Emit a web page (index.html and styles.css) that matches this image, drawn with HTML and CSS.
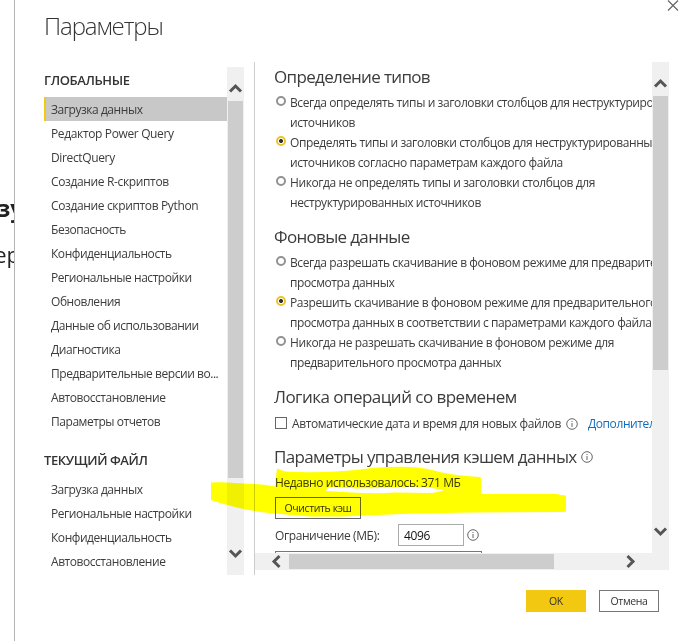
FILE: index.html
```
<!DOCTYPE html>
<html lang="ru">
<head>
<meta charset="utf-8">
<title>Параметры</title>
<link rel="stylesheet" href="styles.css">
</head>
<body>
<div class="screen">
  <aside class="backdrop">
    <div class="backdrop-title">зу</div>
    <div class="backdrop-text">ер</div>
  </aside>
  <main class="dialog">
    <header class="top">
      <h1>Параметры</h1>
      <svg class="close" width="12" height="12" viewBox="0 0 12 12"><path d="M1 0.5 11 10.5M11 0.5 1 10.5"/></svg>
    </header>
    <div class="body">
      <nav class="nav">
        <div class="nav-list">
          <h2 class="first">ГЛОБАЛЬНЫЕ</h2>
          <a class="selected">Загрузка данных</a>
          <a class="latin">Редактор Power Query</a>
          <a class="latin">DirectQuery</a>
          <a class="latin">Создание R-скриптов</a>
          <a class="latin">Создание скриптов Python</a>
          <a>Безопасность</a>
          <a>Конфиденциальность</a>
          <a>Региональные настройки</a>
          <a>Обновления</a>
          <a>Данные об использовании</a>
          <a>Диагностика</a>
          <a>Предварительные версии во...</a>
          <a>Автовосстановление</a>
          <a>Параметры отчетов</a>
          <h2>ТЕКУЩИЙ ФАЙЛ</h2>
          <a>Загрузка данных</a>
          <a>Региональные настройки</a>
          <a>Конфиденциальность</a>
          <a>Автовосстановление</a>
        </div>
        <div class="vbar">
          <svg class="arrow" width="17" height="34" viewBox="0 0 17 34"><path d="M3 24.5 8.5 19 14 24.5"/></svg>
          <div class="thumb nav-thumb"></div>
          <svg class="arrow last" width="17" height="34" viewBox="0 0 17 34"><path d="M3 9.5 8.5 15 14 9.5"/></svg>
        </div>
      </nav>
      <section class="pane">
        <div class="view">
          <div class="content">
            <h3 class="first">Определение типов</h3>
            <div class="opt"><i class="radio"></i><p>Всегда определять типы и заголовки столбцов для неструктурированных<br>источников</p></div>
            <div class="opt"><i class="radio on"></i><p>Определять типы и заголовки столбцов для неструктурированных<br>источников согласно параметрам каждого файла</p></div>
            <div class="opt"><i class="radio"></i><p>Никогда не определять типы и заголовки столбцов для<br>неструктурированных источников</p></div>
            <h3>Фоновые данные</h3>
            <div class="opt"><i class="radio"></i><p>Всегда разрешать скачивание в фоновом режиме для предварительного<br>просмотра данных</p></div>
            <div class="opt"><i class="radio on"></i><p>Разрешить скачивание в фоновом режиме для предварительного<br>просмотра данных в соответствии с параметрами каждого файла</p></div>
            <div class="opt"><i class="radio"></i><p>Никогда не разрешать скачивание в фоновом режиме для<br>предварительного просмотра данных</p></div>
            <h3 class="loose">Логика операций со временем</h3>
            <div class="check"><i class="box"></i><span>Автоматические дата и время для новых файлов</span><svg class="info" width="12" height="12" viewBox="0 0 12 12"><circle cx="6" cy="6" r="5.3"/><path d="M6 5V9M6 3V4"/></svg><a class="link">Дополнительно</a></div>
            <h3>Параметры управления кэшем данных<svg class="info" width="12" height="12" viewBox="0 0 12 12"><circle cx="6" cy="6" r="5.3"/><path d="M6 5V9M6 3V4"/></svg></h3>
            <div class="used">Недавно использовалось: 371 МБ</div>
            <button class="clear">Очистить кэш</button>
            <div class="limit"><label>Ограничение (МБ):</label><div class="input">4096</div><svg class="info" width="12" height="12" viewBox="0 0 12 12"><circle cx="6" cy="6" r="5.3"/><path d="M6 5V9M6 3V4"/></svg></div>
            <div class="next"></div>
          </div>
          <div class="vbar">
            <svg class="arrow" width="17" height="34" viewBox="0 0 17 34"><path d="M3 24.5 8.5 19 14 24.5"/></svg>
            <div class="thumb pane-thumb"></div>
            <svg class="arrow last" width="17" height="34" viewBox="0 0 17 34"><path d="M3 9.5 8.5 15 14 9.5"/></svg>
          </div>
        </div>
        <div class="hbar">
          <svg class="arrow" width="34" height="17" viewBox="0 0 34 17"><path d="M24.500 3 19 8.500 24.500 14"/></svg>
          <div class="hthumb"></div>
          <svg class="arrow right" width="34" height="17" viewBox="0 0 34 17"><path d="M12.500 3 18 8.500 12.500 14"/></svg>
        </div>
      </section>
    </div>
    <footer class="actions">
      <button class="ok">OK</button>
      <button class="cancel">Отмена</button>
    </footer>
  </main>
  <svg class="marker" width="680" height="641" viewBox="0 0 680 641"><path d="M211 482.500 Q213 482 222 482.300 L262 484.500 L275.500 486.500 L275.500 480 L277 468.500 L285 471.500 C310 473 335 472 360 469.500 C385 466 415 465.500 432 470 C445 473.500 460 476 480 477 Q481 477.500 481 479 L481 494 L557 494 L561 495 L566 495.500 L566 511 Q566 512 562 512 L472 512.500 L415 513.500 L365 515.500 L343 516.500 L310 516.500 L280 514 C255 512.500 232 507 211 500 Z M327 488 L326 491 C350 492 372 494.500 395 492.500 L432 493 L444 490.500 C425 485.500 412 486.500 390 487.500 C368 488.500 345 489 333 487 Z" fill-rule="evenodd"/></svg>
</div>
</body>
</html>
```
FILE: styles.css
```
* { box-sizing: border-box; }
body { margin: 0; font-family: "Open Sans", "Noto Sans", sans-serif; font-size: 12px; color: #3c3c3c; background: #fff; }
h1, h2, h3, p { margin: 0; font-weight: 400; }
button { font: inherit; padding: 0; }
.screen { position: relative; display: flex; width: 680px; height: 641px; overflow: hidden; background: #fff; }
.backdrop { width: 14px; overflow: hidden; color: #222; padding-top: 192px; display: flex; flex-direction: column; align-items: flex-end; }
.backdrop-title { font-size: 24px; font-weight: 700; line-height: 32px; margin-right: -10px; }
.backdrop-text { font-size: 22px; line-height: 30px; margin-top: 15px; margin-right: -6px; }
.dialog { width: 666px; border-left: 1px solid #b5b5b5; padding-left: 29px; background: #fff; display: flex; flex-direction: column; }
.top { display: flex; justify-content: space-between; height: 62px; }
h1 { font-size: 24px; font-weight: 300; line-height: 34px; padding-top: 9px; letter-spacing: -1.1px; color: #333; }
.close { margin-right: 1px; fill: none; stroke: #666; stroke-width: 1.2; }
.body { display: flex; height: 513px; }
.nav { display: flex; width: 200px; margin-top: 5px; height: 508px; }
.nav-list { width: 183px; display: flex; flex-direction: column; }
.nav h2 { height: 44px; padding-top: 17px; line-height: 20px; font-size: 13px; font-weight: 600; letter-spacing: -0.4px; color: #333; }
.nav h2.first { height: 30px; padding-top: 3px; }
.nav-list a { height: 24px; line-height: 25px; padding-left: 7px; letter-spacing: -0.45px; white-space: nowrap; }
.nav-list .latin { letter-spacing: -0.36px; }
.nav-list .selected { background: #c8c8c8; border-left: 2px solid #f2c811; padding-left: 5px; }
.vbar { display: flex; flex-direction: column; width: 17px; background: #f0f0f0; flex: none; }
.arrow { flex: none; display: block; fill: none; stroke: #555; stroke-width: 3; }
.last { margin-top: auto; }
.thumb { width: 15px; margin-left: 1px; background: #cdcdcd; }
.nav-thumb { height: 377px; }
.pane-thumb { height: 274px; }
.pane { width: 415px; margin-left: 10px; border-left: 1px solid #ccc; }
.view { display: flex; height: 491px; }
.content { width: 397px; padding-left: 19px; overflow: hidden; letter-spacing: -0.4px; }
h3 { height: 40px; padding-top: 12px; line-height: 24px; font-size: 17px; letter-spacing: -0.66px; white-space: nowrap; }
h3.first { height: 31px; padding-top: 3px; }
h3.loose { letter-spacing: -0.53px; }
h3 .info { margin-left: 4px; }
.opt { display: flex; padding-left: 2px; }
.opt p { line-height: 20px; white-space: nowrap; padding-left: 4px; }
.radio { flex: none; width: 10px; height: 10px; margin-top: 3px; border: 2px solid #929292; border-radius: 50%; }
.radio.on { border-color: #e8c52c; background: radial-gradient(circle, #333 1.7px, #fff 2.3px); }
.check { display: flex; align-items: center; height: 20px; white-space: nowrap; }
.box { flex: none; width: 12px; height: 12px; border: 1.5px solid #666; margin-right: 5px; margin-left: 1px; }
.info { flex: none; fill: none; stroke: #555; stroke-width: 0.9; }
.check .info { margin: 1px 10px 0 5px; }
.link { color: #106ebe; }
.used { height: 24px; line-height: 20px; padding-left: 1px; }
.clear { display: block; width: 86px; height: 22px; margin-left: 1px; border: 1px solid #666; background: transparent; font-size: 10.5px; letter-spacing: -0.4px; color: #333; }
.limit { display: flex; height: 22px; margin-top: 5px; align-items: center; padding-left: 1px; }
.limit label { width: 123px; }
.input { width: 66px; height: 22px; border: 1px solid #ababab; line-height: 21px; padding-left: 5px; color: #111; margin-right: 3px; }
.next { width: 207px; height: 20px; margin: 5px 0 0 1px; border: 1px solid #777; }
.hbar { display: flex; width: 414px; height: 17px; background: #f0f0f0; }
.hthumb { width: 265px; height: 15px; margin-top: 1px; background: #cdcdcd; }
.right { margin-left: 61px; }
.actions { display: flex; justify-content: flex-end; gap: 13px; padding: 15px 21px 0 0; }
.actions button { width: 60px; height: 22px; font-size: 10.5px; letter-spacing: -0.4px; color: #333; border: 1px solid #777; background: #fff; }
.actions .ok { background: #f2c811; border-color: #f2c811; }
.marker { position: absolute; left: 0; top: 0; fill: #ff0; mix-blend-mode: multiply; pointer-events: none; }
```
